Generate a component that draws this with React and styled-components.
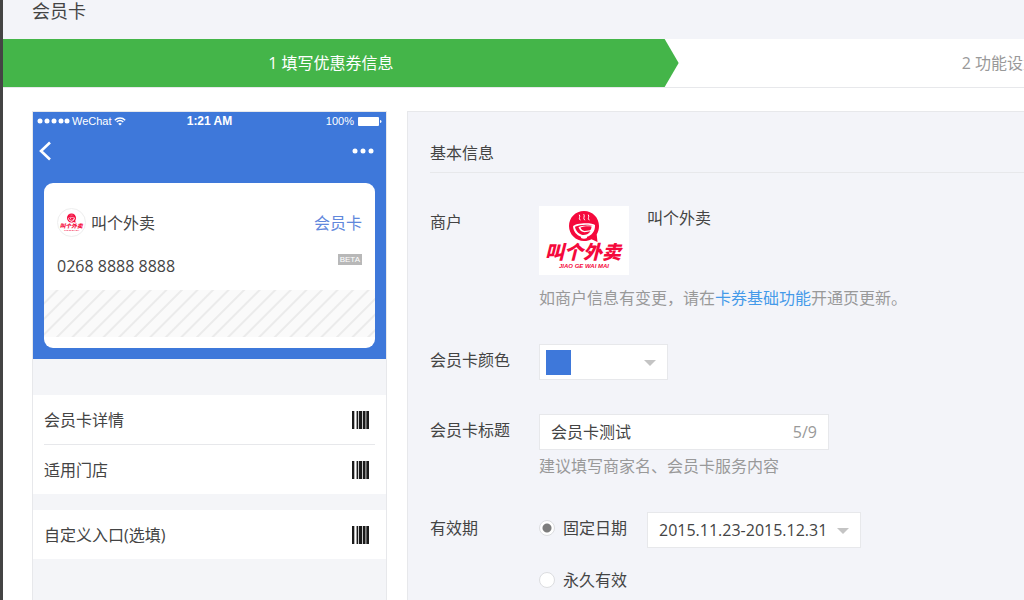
import React, { useState } from 'react'
import styled, { createGlobalStyle } from 'styled-components'

const COLORS = {
  brand: '#3e78da',
  green: '#44b549',
  logo: '#f5093c',
  page: '#f3f4f9',
  phone: '#f4f5f8',
  border: '#e7e8eb',
  text: '#444',
  muted: '#999',
  link: '#459ae9',
}

const MAX_TITLE = 9

const LogoMark = ({ width }) => (
  <svg width={width} viewBox="0 0 90 69" role="img" aria-label="叫个外卖">
    <path
      d="M45 5c-8.600 0-15 6.700-15 15s6.700 15 15 15c3 0 5.500-.600 7.500-1.800L58.500 36l-.8-7.500c1.500-2.400 2.300-5.300 2.300-8.500 0-8.300-6.400-15-15-15z"
      fill={COLORS.logo}
    />
    <path
      d="M41 14c-2-2 .8-3-.5-5M45.500 14c-2-2 .8-3.500-.5-5.500M50 14c-2-2 .8-3-.5-5"
      fill="none"
      stroke="#fff"
      strokeWidth="1"
      strokeLinecap="round"
    />
    <path
      d="M34 20.500c1-3.500 19-4.500 22-1.500.3 6.500-3.500 10.500-8 11.800.5 1.200-1 2-3 2s-3.500-.8-3-2c-4.500-1.700-7.500-5.300-8-10.300z"
      fill="#fff"
    />
    <path
      d="M36 20.800c4-2.400 14-2.700 18-1.200-3.500-.2-12 0-14.500 1.600 1 3.200 3.500 4.800 6 5l6-1c-2 3-5 4-8 3.800-4-1-7-4.200-7.500-8.200zM41.500 21.500c3-1.300 8-1.600 11-1 0 2-.6 3-1.500 3.800l-5.500.7c-2-.5-3.500-1.700-4-3.500z"
      fill={COLORS.logo}
    />
    <LogoName x="44" y="53" textAnchor="middle">叫个外卖</LogoName>
    <LogoLatin x="45" y="62" textAnchor="middle">JIAO GE WAI MAI</LogoLatin>
  </svg>
)

const Barcode = () => (
  <svg width="17" height="18" viewBox="0 0 17 18" aria-hidden="true">
    <path d="M0 0h17v18H0z" fill="#ccc" />
    <path
      d="M0 0h2.400v18H0zM4.600 0h1.400v18H4.600zM7 0h3v18H7zM11 0h2v18h-2zM13.600 0h1v18h-1zM15 0h2v18h-2z"
      fill="#1a1a1a"
    />
    <path d="M2.600 0h1.600v18H2.600z" fill="#fff" />
  </svg>
)

const PhonePreview = ({ title }) => (
  <Phone>
    <CardArea>
      <StatusBar>
        <Carrier>
          <svg width="33" height="6" viewBox="0 0 33 6" fill="#fff" aria-hidden="true">
            {[3, 10, 17, 24, 30].map(cx => (
              <circle key={cx} cx={cx} cy="3" r="2.500" />
            ))}
          </svg>
          WeChat
          <svg width="12" height="9" viewBox="0 0 12 9" fill="none" stroke="#fff" aria-hidden="true">
            <path d="M.8 3.200c3-2.900 7.400-2.900 10.400 0M2.700 5.100c2-1.900 4.600-1.900 6.600 0" strokeWidth="1.400" />
            <path d="M4.200 6.700c1-1 2.600-1 3.600 0L6 8.600z" fill="#fff" stroke="none" />
          </svg>
        </Carrier>
        <Clock>1:21 AM</Clock>
        <Battery>
          100%
          <svg width="24" height="9" viewBox="0 0 24 9" fill="#fff" aria-hidden="true">
            <rect width="21" height="9" rx="1" />
            <path d="M22 3c2 .3 2 2.700 0 3z" />
          </svg>
        </Battery>
      </StatusBar>
      <NavBar>
        <NavButton type="button" aria-label="返回">
          <svg width="12" height="20" viewBox="0 0 12 20" fill="none" stroke="#fff" strokeWidth="2.600">
            <path d="M11 1.500L2 10l9 8.500" />
          </svg>
        </NavButton>
        <NavButton type="button" aria-label="更多">
          <svg width="22" height="6" viewBox="0 0 22 6" fill="#fff">
            <circle cx="3" cy="3" r="2.500" />
            <circle cx="11" cy="3" r="2.500" />
            <circle cx="19" cy="3" r="2.500" />
          </svg>
        </NavButton>
      </NavBar>
      <Card>
        <CardHead>
          <Avatar>
            <LogoMark width={27} />
          </Avatar>
          <CardName>叫个外卖</CardName>
          <CardKind>{title}</CardKind>
        </CardHead>
        <CardCode>
          0268 8888 8888
          <Badge>BETA</Badge>
        </CardCode>
        <Stripes />
      </Card>
    </CardArea>
    <Menu>
      <MenuItem>
        会员卡详情
        <Barcode />
      </MenuItem>
      <MenuItem>
        适用门店
        <Barcode />
      </MenuItem>
    </Menu>
    <Menu>
      <MenuItem>
        自定义入口(选填)
        <Barcode />
      </MenuItem>
    </Menu>
  </Phone>
)

const App = () => {
  const [title, setTitle] = useState('会员卡测试')
  const [period, setPeriod] = useState('fixed')

  return (
    <>
      <GlobalStyle />
      <Page>
        <Header>
          <Title>会员卡</Title>
        </Header>
        <Steps>
          <Step $active>1 填写优惠券信息</Step>
          <Step>2 功能设置</Step>
        </Steps>
        <Main>
          <PhonePreview title="会员卡" />
          <Panel>
            <PanelTitle>基本信息</PanelTitle>
            <Fields>
              <Field>
                <FieldName>商户</FieldName>
                <FieldBody>
                  <Merchant>
                    <LogoBox>
                      <LogoMark width={90} />
                    </LogoBox>
                    叫个外卖
                  </Merchant>
                  <MerchantHint>
                    如商户信息有变更，请在<Link href="#card">卡券基础功能</Link>开通页更新。
                  </MerchantHint>
                </FieldBody>
              </Field>
              <Field>
                <FieldName as="label" htmlFor="color">会员卡颜色</FieldName>
                <FieldBody>
                  <SelectBox $width={129}>
                    <Swatch />
                    <Select id="color">
                      <option value={COLORS.brand} aria-label="蓝色" />
                    </Select>
                  </SelectBox>
                </FieldBody>
              </Field>
              <Field>
                <FieldName as="label" htmlFor="title">会员卡标题</FieldName>
                <FieldBody>
                  <InputBox>
                    <Input
                      id="title"
                      type="text"
                      maxLength={MAX_TITLE}
                      value={title}
                      onChange={e => setTitle(e.target.value)}
                    />
                    <Counter>{title.length}/{MAX_TITLE}</Counter>
                  </InputBox>
                  <Hint>建议填写商家名、会员卡服务内容</Hint>
                </FieldBody>
              </Field>
              <Field>
                <FieldName>有效期</FieldName>
                <FieldBody>
                  <Period>
                    <RadioLabel>
                      <Radio
                        name="period"
                        checked={period === 'fixed'}
                        onChange={() => setPeriod('fixed')}
                      />
                      固定日期
                    </RadioLabel>
                    <SelectBox $width={214}>
                      <Select aria-label="固定日期">
                        <option>2015.11.23-2015.12.31</option>
                      </Select>
                    </SelectBox>
                  </Period>
                  <Period>
                    <RadioLabel>
                      <Radio
                        name="period"
                        checked={period === 'forever'}
                        onChange={() => setPeriod('forever')}
                      />
                      永久有效
                    </RadioLabel>
                  </Period>
                </FieldBody>
              </Field>
            </Fields>
          </Panel>
        </Main>
      </Page>
    </>
  )
}

const GlobalStyle = createGlobalStyle`
    * {
        box-sizing: border-box;
    }

    body {
        margin: 0;
        background: #fff;
        color: ${COLORS.text};
        font: 16px/24px 'Open Sans', 'Noto Sans CJK SC', sans-serif;
    }

    input, select, button {
        font: inherit;
        color: inherit;
    }

    svg {
        display: block;
        flex: none;
    }
`

const Page = styled.div`
    display: flex;
    flex-direction: column;
    min-height: 100vh;
    border-left: 3px solid #444;
`

const Header = styled.header`
    height: 39px;
    padding: 0 29px;
    background: ${COLORS.page};
`

const Title = styled.h1`
    margin: 0;
    font-size: 18px;
    line-height: 22px;
    font-weight: 400;
`

const Steps = styled.div`
    display: flex;
    overflow: hidden;
    border-bottom: 1px solid ${COLORS.border};
`

// the active step ends in a 14px arrow that lies over the next one
const Step = styled.div`
    flex: none;
    width: ${props => (props.$active ? 'calc(65% + 12px)' : '65%')};
    margin-right: ${props => (props.$active ? '-14px' : 0)};
    padding: ${props => (props.$active ? '0 20px 0 0' : '0 0 0 8px')};
    line-height: 48px;
    text-align: center;
    color: ${props => (props.$active ? '#fff' : COLORS.muted)};
    background: ${props => (props.$active ? COLORS.green : 'none')};
    clip-path: ${props => props.$active
      && 'polygon(0 0, calc(100% - 14px) 0, 100% 50%, calc(100% - 14px) 100%, 0 100%)'};
`

const Main = styled.main`
    display: flex;
    flex: 1;
    gap: 20px;
    padding: 23px 0 0 29px;
`

const Phone = styled.section`
    flex: none;
    width: 355px;
    border: 1px solid ${COLORS.border};
    border-bottom: none;
    background: ${COLORS.phone};
`

const CardArea = styled.div`
    margin-bottom: 36px;
    padding-bottom: 11px;
    background: ${COLORS.brand};
`

const StatusBar = styled.div`
    display: grid;
    grid-template-columns: 1fr auto 1fr;
    align-items: center;
    height: 18px;
    padding: 0 4px;
    color: #fff;
    font-family: 'Liberation Sans', sans-serif;
    font-size: 11px;
    line-height: 18px;
`

const Carrier = styled.span`
    display: flex;
    align-items: center;
    gap: 2px;
`

const Clock = styled.span`
    font-size: 12px;
    font-weight: 700;
`

const Battery = styled.span`
    display: flex;
    align-items: center;
    justify-content: flex-end;
    gap: 4px;
`

const NavBar = styled.div`
    display: flex;
    align-items: center;
    justify-content: space-between;
    height: 42px;
    padding: 0 12px 0 6px;
`

const NavButton = styled.button`
    padding: 0;
    border: none;
    background: none;
    cursor: pointer;
`

const Card = styled.div`
    margin: 11px 11px 0;
    padding: 25px 0 11px;
    border-radius: 9px;
    background: #fff;
`

const CardHead = styled.div`
    display: flex;
    align-items: center;
    gap: 5px;
    padding: 0 13px;
`

const Avatar = styled.span`
    display: flex;
    align-items: center;
    justify-content: center;
    width: 29px;
    height: 29px;
    border: 1px solid #eee;
    border-radius: 50%;
    overflow: hidden;
`

const CardName = styled.span`
    flex: 1;
`

const CardKind = styled.span`
    color: #6188dc;
`

const CardCode = styled.div`
    display: flex;
    align-items: flex-start;
    justify-content: space-between;
    padding: 17px 13px 12px;
`

const Badge = styled.span`
    padding: 0 2px;
    background: #b8b8b8;
    color: #fff;
    font-family: 'Liberation Sans', sans-serif;
    font-size: 8px;
    line-height: 11px;
`

const Stripes = styled.div`
    height: 47px;
    background: repeating-linear-gradient(
        135deg,
        #fafafa 0,
        #fafafa 8px,
        #ebebeb 9px,
        #ebebeb 10px,
        #fafafa 11px
    );
`

const Menu = styled.ul`
    margin: 0 0 16px;
    padding: 0 11px;
    list-style: none;
    background: #fff;
`

const MenuItem = styled.li`
    display: flex;
    align-items: center;
    justify-content: space-between;
    height: 49px;
    padding-right: 6px;

    & + & {
        height: 50px;
        border-top: 1px solid ${COLORS.border};
    }
`

const Panel = styled.section`
    flex: 1;
    min-width: 0;
    padding: 29px 0 0 22px;
    border: 1px solid ${COLORS.border};
    border-width: 1px 0 0 1px;
    background: ${COLORS.page};
`

const PanelTitle = styled.h2`
    margin: 0;
    padding-bottom: 7px;
    border-bottom: 1px solid ${COLORS.border};
    font-size: 16px;
    font-weight: 400;
`

const Fields = styled.form`
    display: flex;
    flex-direction: column;
    gap: 34px;
    padding-top: 33px;
`

const Field = styled.div`
    display: flex;
`

const FieldName = styled.span`
    flex: none;
    width: 109px;
    line-height: 32px;
`

const FieldBody = styled.div`
    flex: 1;
    min-width: 0;
`

const Merchant = styled.div`
    display: flex;
    gap: 18px;
`

const LogoBox = styled.span`
    background: #fff;
`

const Hint = styled.p`
    margin: 4px 0 0;
    color: ${COLORS.muted};
`

const MerchantHint = styled(Hint)`
    margin-top: 11px;
`

const Link = styled.a`
    color: ${COLORS.link};
    text-decoration: none;
`

const SelectBox = styled.div`
    position: relative;
    width: ${props => props.$width}px;
    height: 36px;
    border: 1px solid ${COLORS.border};
    background: #fff;

    &::after {
        content: '';
        position: absolute;
        top: 15px;
        right: 11px;
        border: 6px solid transparent;
        border-top-color: #c4c4c4;
        border-bottom: none;
        pointer-events: none;
    }
`

const Select = styled.select`
    width: 100%;
    height: 100%;
    padding: 0 11px;
    border: none;
    background: none;
    appearance: none;
`

const Swatch = styled.span`
    position: absolute;
    top: 5px;
    left: 6px;
    width: 25px;
    height: 25px;
    background: ${COLORS.brand};
    pointer-events: none;
`

const InputBox = styled.div`
    display: flex;
    align-items: center;
    max-width: 290px;
    height: 36px;
    padding: 0 11px;
    border: 1px solid ${COLORS.border};
    background: #fff;
`

const Input = styled.input`
    flex: 1;
    min-width: 0;
    padding: 0;
    border: none;
    outline: none;
    background: none;
`

const Counter = styled.span`
    color: ${COLORS.muted};
`

const Period = styled.div`
    display: flex;
    gap: 20px;

    & + & {
        margin-top: 16px;
    }
`

const RadioLabel = styled.label`
    display: flex;
    align-items: center;
    gap: 8px;
    height: 32px;
`

const Radio = styled.input.attrs({ type: 'radio' })`
    appearance: none;
    width: 16px;
    height: 16px;
    margin: 0;
    border: 1px solid #dcdde0;
    border-radius: 50%;
    background: #fff;

    &:checked {
        background: radial-gradient(#7d7d7d 4px, #fff 5px);
    }
`

const LogoName = styled.text`
    fill: ${COLORS.logo};
    font-family: 'Noto Sans CJK SC', sans-serif;
    font-size: 19px;
    font-style: italic;
    font-weight: 900;
`

const LogoLatin = styled.text`
    fill: ${COLORS.logo};
    font-family: 'Liberation Sans', sans-serif;
    font-size: 6px;
    font-style: italic;
    font-weight: 700;
`

export default App
